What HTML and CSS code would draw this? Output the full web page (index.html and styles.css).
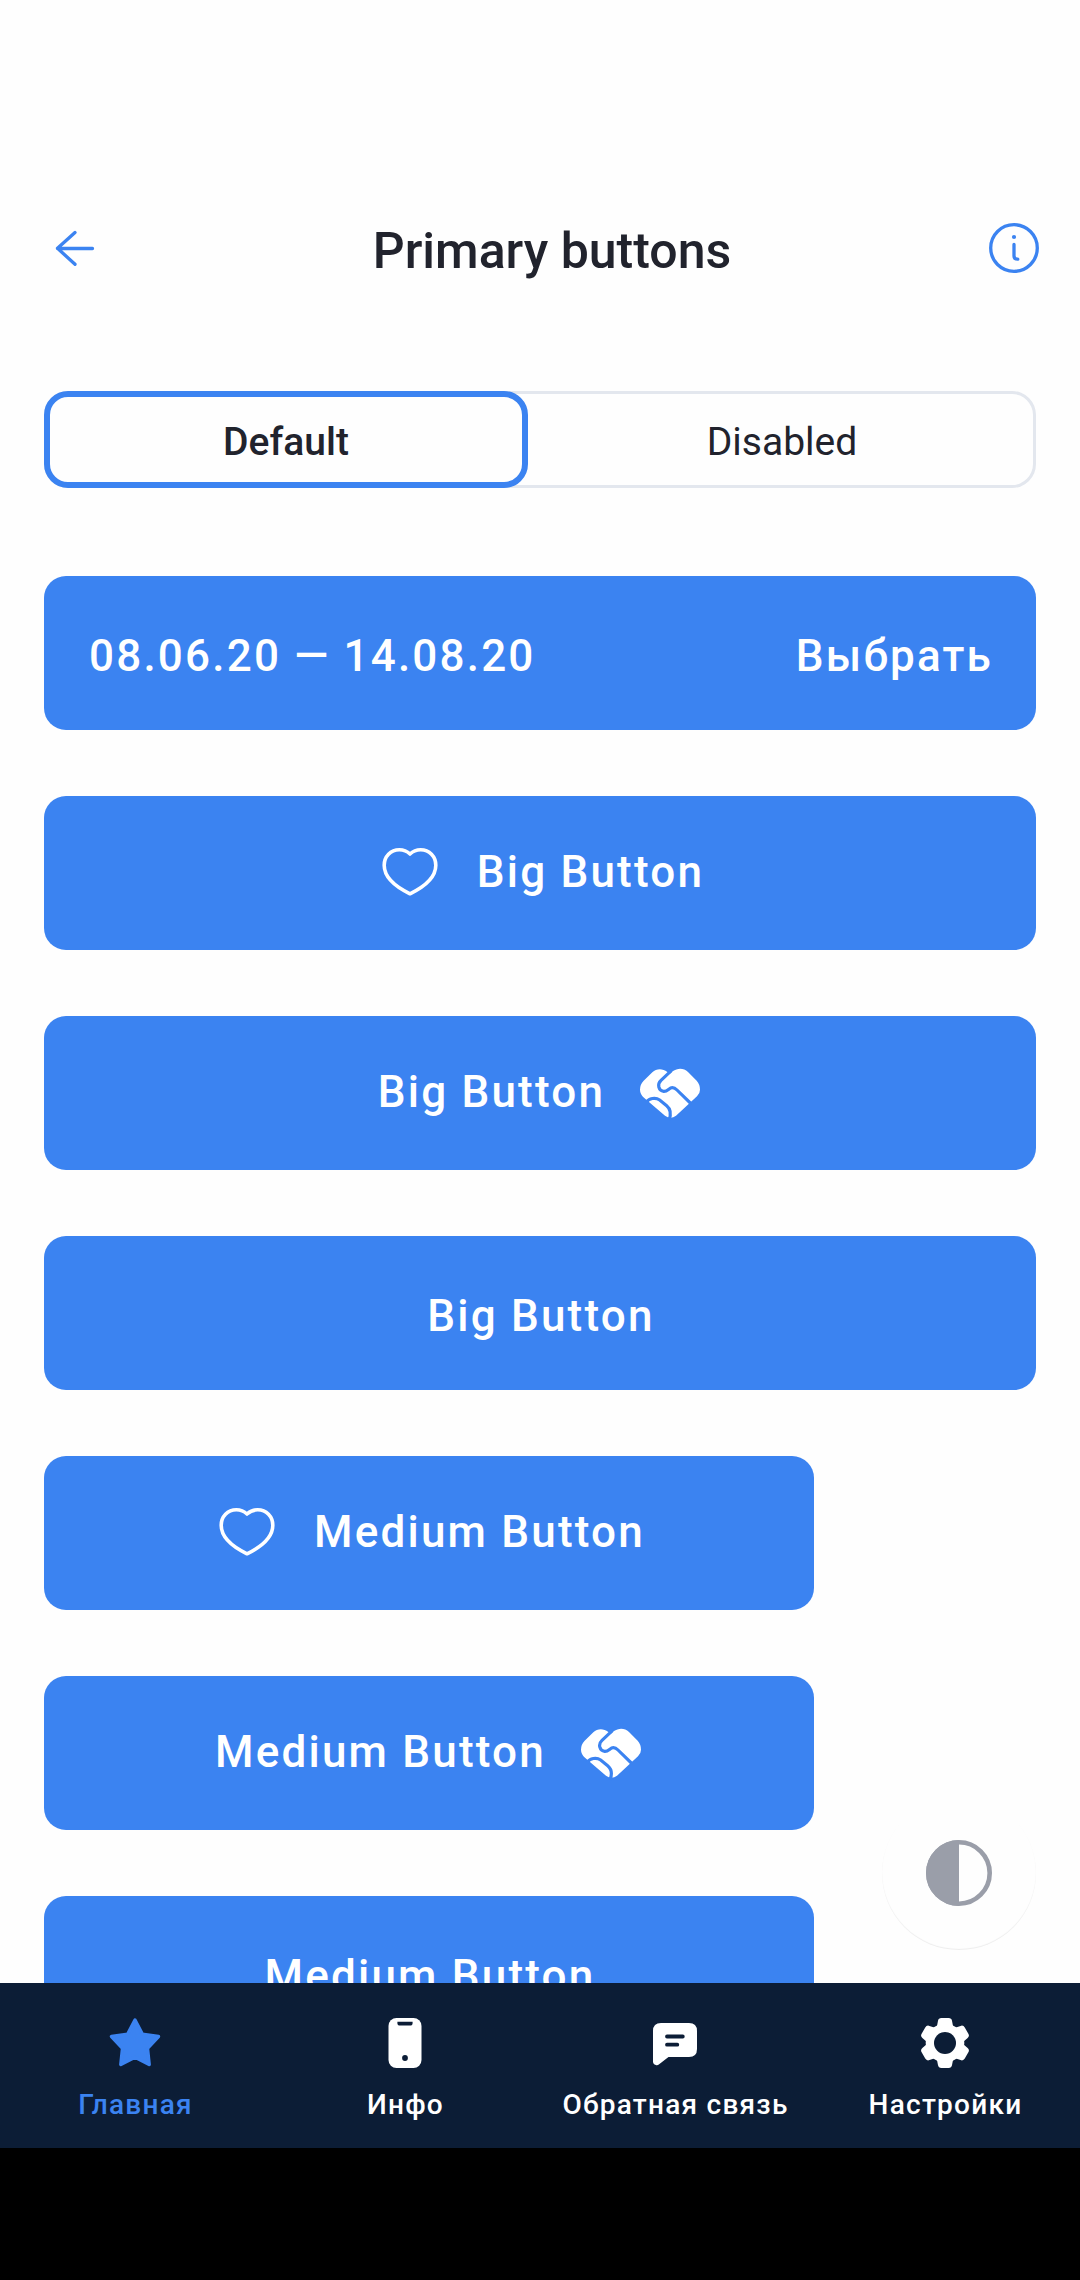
FILE: index.html
```html
<!DOCTYPE html>
<html lang="ru">
<head>
<meta charset="utf-8">
<title>Primary buttons</title>
<link rel="stylesheet" href="styles.css">
</head>
<body>
<svg class="sprite" aria-hidden="true">
  <symbol id="heart" viewBox="0 0 66 66">
    <path d="M33 14C29.8 11 26.2 9.8 22.4 9.8C13.6 9.8 7.2 16.4 7.2 25.3C7.2 37 17.5 46.3 33 53.8C48.5 46.3 58.8 37 58.8 25.3C58.8 16.4 52.4 9.8 43.6 9.8C39.8 9.8 36.2 11 33 14Z" fill="none" stroke="currentColor" stroke-width="3.6" stroke-linejoin="round"/>
  </symbol>
  <symbol id="handshake" viewBox="54 90 198 198">
    <path d="M63 179Q63 163 74 152L100 127C112 115 130 114 145 126L152 132L161 124C177 113 194 114 207 126L233 152Q243 163 243 179Q243 190 234 199L171 257Q155 269 138 257L75 203Q63 192 63 179Z" fill="currentColor"/>
    <path class="groove" d="M157 122L126 151C113 163 119 183 134 184C146 185 150 173 160 173C165 173 169 175 174 180L217 222M82 217C90 205 109 201 122 210L143 227C155 237 157 252 150 270"/>
  </symbol>
</svg>
<div class="screen">
  <header class="header">
    <svg class="back" viewBox="0 0 66 66"><path d="M50.5 33.5H15.5M33 17.5L15.5 33.3L33 49.3" fill="none" stroke="currentColor" stroke-width="3.3" stroke-linecap="round" stroke-linejoin="round"/></svg>
    <h1 class="title">Primary buttons</h1>
    <svg class="info" viewBox="0 0 66 66"><circle cx="33" cy="33" r="23.3" fill="none" stroke="currentColor" stroke-width="3.3"/><circle cx="33" cy="22" r="2.1" fill="currentColor"/><path d="M33 29.5V41Q33 44.2 36.8 44.2" fill="none" stroke="currentColor" stroke-width="3.3" stroke-linecap="round"/></svg>
  </header>
  <main class="content">
    <div class="segments">
      <div class="segment active">Default</div>
      <div class="segment">Disabled</div>
    </div>
    <div class="buttons">
      <button class="button split plain"><span>08.06.20 — 14.08.20</span><span>Выбрать</span></button>
      <button class="button"><svg class="icon"><use href="#heart"/></svg><span>Big Button</span></button>
      <button class="button"><span>Big Button</span><svg class="icon"><use href="#handshake"/></svg></button>
      <button class="button plain"><span>Big Button</span></button>
      <button class="button medium"><svg class="icon"><use href="#heart"/></svg><span>Medium Button</span></button>
      <button class="button medium"><span>Medium Button</span><svg class="icon"><use href="#handshake"/></svg></button>
      <button class="button medium plain"><span>Medium Button</span></button>
    </div>
  </main>
  <div class="fab"><svg class="icon" viewBox="0 0 66 66"><circle cx="33" cy="33" r="30.7" fill="none" stroke="currentColor" stroke-width="4.6"/><path d="M33 0A33 33 0 0 0 33 66Z" fill="currentColor"/></svg></div>
  <nav class="tabs">
    <div class="tab selected">
      <svg class="icon" viewBox="0 0 66 66"><path d="M33 10L40.3 24.1L56.5 26.5L45.5 38.3L47.2 54.5L33 47.3L18.8 54.5L20.5 38.3L9.5 26.5L25.7 24.1Z" fill="currentColor" stroke="currentColor" stroke-width="3.4" stroke-linejoin="round"/></svg>
      <span>Главная</span>
    </div>
    <div class="tab">
      <svg class="icon" viewBox="0 0 66 66"><rect x="16.5" y="8" width="33" height="50" rx="8" fill="currentColor"/><path class="cutout" d="M25.4 11.7H40.6V13Q40.6 15.6 38 15.6H28Q25.4 15.6 25.4 13Z"/><circle class="cutout" cx="33" cy="48" r="2.9"/></svg>
      <span>Инфо</span>
    </div>
    <div class="tab">
      <svg class="icon" viewBox="0 0 66 66"><path d="M19 13H47Q55 13 55 21V39Q55 47 47 47H26.5L16.8 54.6Q15.5 55.5 13.8 55Q11 54.3 11 51.500V21Q11 13 19 13Z" fill="currentColor"/><path class="lines" d="M25 26.500H40.800M25 34.700H35.300"/></svg>
      <span>Обратная связь</span>
    </div>
    <div class="tab">
      <svg class="icon" viewBox="-33 -33 66 66"><g fill="currentColor" stroke="currentColor" stroke-width="7" stroke-linejoin="round"><circle r="15.800"/><path id="tooth" d="M-5 -14L-3.600 -21.400H3.600L5 -14Z"/><use href="#tooth" transform="rotate(60)"/><use href="#tooth" transform="rotate(120)"/><use href="#tooth" transform="rotate(180)"/><use href="#tooth" transform="rotate(240)"/><use href="#tooth" transform="rotate(300)"/></g><circle class="cutout" r="11"/></svg>
      <span>Настройки</span>
    </div>
  </nav>
</div>
</body>
</html>
```
FILE: styles.css
```css
:root {
  --blue: #3b83f1;
  --navy: #0c1d36;
  --ink: #21232d;
  --surface: #fefefe;
}
* { box-sizing: border-box; }
body {
  margin: 0;
  background: #000;
  color: var(--ink);
  font-family: Roboto, "Noto Sans", sans-serif;
}
.sprite { position: absolute; width: 0; height: 0; }
.screen {
  position: relative;
  display: flex;
  flex-direction: column;
  width: 1080px;
  height: 2280px;
  padding-bottom: 132px;
  overflow: hidden;
}
.header {
  flex: none;
  display: flex;
  align-items: center;
  justify-content: space-between;
  height: 391px;
  padding: 215px 33px 110px 42px;
  background: var(--surface);
}
.back, .info { width: 66px; height: 66px; color: var(--blue); }
.title {
  margin: 5px 0 0 15px;
  font-size: 50px;
  font-weight: 500;
  line-height: 60px;
}
.content {
  flex: 1;
  min-height: 0;
  overflow: hidden;
  padding: 0 44px;
  background: var(--surface);
}
.segments {
  display: flex;
  height: 97px;
  border-radius: 24px;
  box-shadow: inset 0 0 0 3px #e3e7ee;
}
.segment {
  flex: 1;
  display: flex;
  align-items: center;
  justify-content: center;
  padding-top: 4px;
  font-size: 39px;
}
.segment.active {
  flex: 0 0 484px;
  border: 6px solid var(--blue);
  border-radius: 24px;
  background: var(--surface);
  font-weight: 500;
}
.buttons {
  display: flex;
  flex-direction: column;
  gap: 66px;
  padding-top: 88px;
}
.button {
  flex: none;
  display: flex;
  align-items: center;
  justify-content: center;
  gap: 33px;
  width: 100%;
  height: 154px;
  padding: 0 44px;
  border: 0;
  border-radius: 22px;
  background: var(--blue);
  color: #fff;
  font: 500 44px/52px Roboto, "Noto Sans", sans-serif;
  letter-spacing: 2.2px;
}
.button span { margin: 0 -1px 0 1px; padding-bottom: 2px; }
.button.medium { width: 770px; }
.button.plain { padding-top: 8px; }
.button.split { justify-content: space-between; }
.icon { flex: none; width: 66px; height: 66px; }
.groove { fill: none; stroke: var(--blue); stroke-width: 9.5; }
.fab {
  position: absolute;
  left: 882px;
  top: 1796px;
  display: grid;
  place-items: center;
  width: 154px;
  height: 154px;
  border-radius: 50%;
  background: var(--surface);
  box-shadow: inset 0 -1px 1px rgba(0, 0, 0, .07);
  color: #9a9ea9;
}
.tabs {
  flex: none;
  display: grid;
  grid-template-columns: repeat(4, 1fr);
  height: 165px;
  background: var(--navy);
  color: #fff;
}
.tab {
  display: flex;
  flex-direction: column;
  align-items: center;
  gap: 13px;
  padding-top: 27px;
  font-size: 28px;
  font-weight: 500;
  line-height: 32px;
  letter-spacing: 1.25px;
  white-space: nowrap;
}
.tab span { padding-left: 1px; }
.tab.selected { color: var(--blue); }
.cutout { fill: var(--navy); }
.lines { fill: none; stroke: var(--navy); stroke-width: 3.8; stroke-linecap: round; }
```
